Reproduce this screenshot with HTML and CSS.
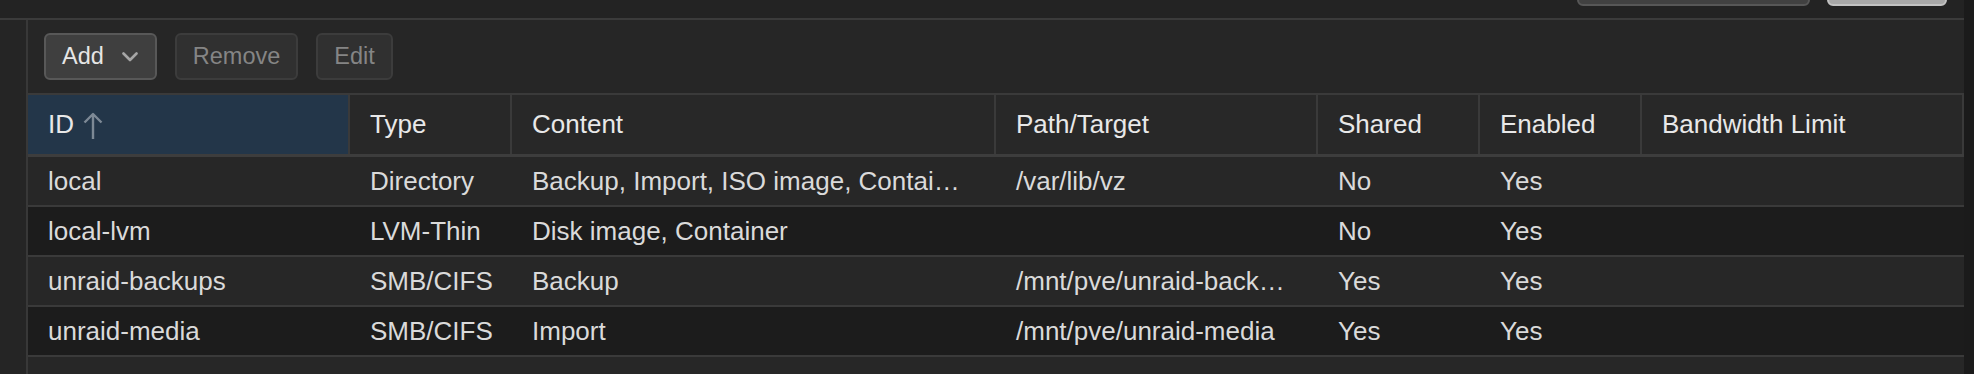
FILE: index.html
```html
<!DOCTYPE html>
<html>
<head>
<meta charset="utf-8">
<link rel="stylesheet" href="styles.css">
</head>
<body>
<div class="app">
  <div class="main">
    <div class="topbar">
      <div class="search-input"></div>
      <div class="top-btn"></div>
    </div>
    <div class="workspace">
      <div class="leftpane"></div>
      <div class="panel">
        <div class="toolbar">
          <button class="btn btn-active">Add
            <svg class="chev" width="16" height="10" viewBox="0 0 16 10"><path d="M1.5 1.5 L8 8 L14.5 1.5" fill="none" stroke="#a6a6a6" stroke-width="2.6" stroke-linecap="round" stroke-linejoin="round"/></svg>
          </button>
          <button class="btn btn-disabled">Remove</button>
          <button class="btn btn-disabled">Edit</button>
        </div>
        <div class="grid">
          <div class="row head">
            <div class="cell c-id sorted">ID
              <svg class="sort" width="20" height="28" viewBox="0 0 20 28"><path d="M10 2 L10 27 M1.5 10.5 L10 2 L18.5 10.5" fill="none" stroke="#7d8995" stroke-width="2.4" stroke-linejoin="round"/></svg>
            </div>
            <div class="cell c-type">Type</div>
            <div class="cell c-content">Content</div>
            <div class="cell c-path">Path/Target</div>
            <div class="cell c-shared">Shared</div>
            <div class="cell c-enabled">Enabled</div>
            <div class="cell c-bw">Bandwidth Limit</div>
          </div>
          <div class="row data odd">
            <div class="cell c-id">local</div>
            <div class="cell c-type">Directory</div>
            <div class="cell c-content">Backup, Import, ISO image, Contai…</div>
            <div class="cell c-path">/var/lib/vz</div>
            <div class="cell c-shared">No</div>
            <div class="cell c-enabled">Yes</div>
            <div class="cell c-bw"></div>
          </div>
          <div class="row data even">
            <div class="cell c-id">local-lvm</div>
            <div class="cell c-type">LVM-Thin</div>
            <div class="cell c-content">Disk image, Container</div>
            <div class="cell c-path"></div>
            <div class="cell c-shared">No</div>
            <div class="cell c-enabled">Yes</div>
            <div class="cell c-bw"></div>
          </div>
          <div class="row data odd">
            <div class="cell c-id">unraid-backups</div>
            <div class="cell c-type">SMB/CIFS</div>
            <div class="cell c-content">Backup</div>
            <div class="cell c-path">/mnt/pve/unraid-back…</div>
            <div class="cell c-shared">Yes</div>
            <div class="cell c-enabled">Yes</div>
            <div class="cell c-bw"></div>
          </div>
          <div class="row data even">
            <div class="cell c-id">unraid-media</div>
            <div class="cell c-type">SMB/CIFS</div>
            <div class="cell c-content">Import</div>
            <div class="cell c-path">/mnt/pve/unraid-media</div>
            <div class="cell c-shared">Yes</div>
            <div class="cell c-enabled">Yes</div>
            <div class="cell c-bw"></div>
          </div>
        </div>
      </div>
    </div>
  </div>
  <div class="rightstrip"></div>
</div>
</body>
</html>
```

FILE: styles.css
```css
* { box-sizing: border-box; }
html, body {
  margin: 0;
  padding: 0;
  height: 374px;
  overflow: hidden;
  background: #262626;
  font-family: "Liberation Sans", Arial, sans-serif;
}
.app {
  display: flex;
  height: 374px;
}
.main {
  width: 1964px;
  display: flex;
  flex-direction: column;
}
.rightstrip {
  width: 10px;
  background: #1b1b1b;
}
.topbar {
  height: 20px;
  background: #232323;
  border-bottom: 2px solid #3b3b3b;
  display: flex;
  justify-content: flex-end;
  align-items: flex-start;
  overflow: hidden;
  padding-right: 17px;
  gap: 17px;
}
.search-input {
  width: 233px;
  height: 40px;
  margin-top: -34px;
  background: #414141;
  border: 2px solid #575757;
  border-radius: 6px;
}
.top-btn {
  width: 120px;
  height: 40px;
  margin-top: -34px;
  background: #a8a8a8;
  border: 2px solid #c2c2c2;
  border-radius: 6px;
}
.workspace {
  flex: 1;
  display: flex;
}
.leftpane {
  width: 28px;
  background: #252525;
  border-right: 2px solid #383838;
}
.panel {
  flex: 1;
  display: flex;
  flex-direction: column;
  background: #272727;
}
.toolbar {
  height: 73px;
  display: flex;
  align-items: center;
  gap: 18px;
  padding-left: 16px;
  background: #262626;
}
.btn {
  height: 47px;
  margin-top: -1px;
  font-family: "Liberation Sans", Arial, sans-serif;
  font-size: 23.5px;
  border-radius: 6px;
  padding: 0 16px;
  display: flex;
  align-items: center;
}
.btn-active {
  background: #3f3f3f;
  border: 2px solid #585858;
  color: #e6e6e6;
  padding-right: 17px;
}
.btn-active .chev {
  margin-left: 18px;
  margin-top: 2px;
}
.btn-disabled {
  background: #303030;
  border: 2px solid #3c3c3c;
  color: #858585;
}
.grid {
  display: flex;
  flex-direction: column;
  border-top: 2px solid #3a3a3a;
}
.row {
  display: flex;
  width: 1936px;
}
.cell {
  padding: 0 4px 0 20px;
  font-size: 26px;
  white-space: nowrap;
  overflow: hidden;
  display: flex;
  align-items: center;
}
.head {
  height: 62px;
  background: #282828;
  border-bottom: 3px solid #3d3d3d;
}
.head .cell {
  color: #e8e8e8;
  border-right: 2px solid #3a3a3a;
}
.head .sorted {
  background: #233649;
}
.sort {
  margin-left: 9px;
  margin-top: 2px;
}
.data {
  height: 50px;
  border-bottom: 2px solid #3a3a3a;
}
.data .cell {
  color: #dadada;
  display: block;
  line-height: 48px;
}
.odd { background: #272727; }
.even { background: #1c1c1c; }
.c-id { width: 322px; }
.c-type { width: 162px; }
.c-content { width: 484px; }
.c-path { width: 322px; }
.c-shared { width: 162px; }
.c-enabled { width: 162px; }
.c-bw { width: 322px; }
```
